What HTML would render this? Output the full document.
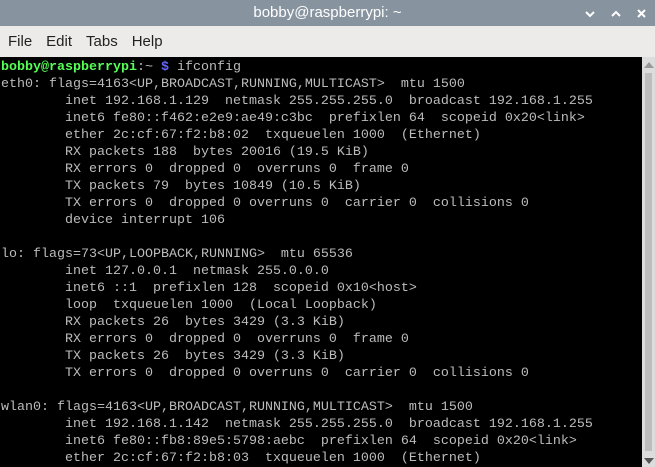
<!DOCTYPE html>
<html><head><style>
body{margin:0;width:655px;height:467px;overflow:hidden;background:#000;font-family:"Liberation Sans",sans-serif}
#t{position:absolute;top:0;left:0;width:655px;height:26px;background:#87939e;color:#fff;font-size:15px;text-align:center;line-height:26px}
#m{position:absolute;top:26px;left:0;width:655px;height:31px;background:#edebe9;font-size:15px;line-height:31px;color:#222}
#m span{margin-left:8px;margin-right:6px}
#term{position:absolute;top:57px;left:0;width:642px;height:410px;background:#000;overflow:hidden}
pre{margin:0;padding:2px 0 0 1px;font-family:"Liberation Mono",monospace;font-size:13.33px;line-height:17px;color:#bcbcbc}
.g{color:#5f5;font-weight:bold}.b{color:#66f;font-weight:bold}
#sb{position:absolute;left:642px;top:57px;width:13px;height:410px;background:#dcdcdc}
#th{position:absolute;left:645px;top:73px;width:7px;height:378px;background:#bdbdbd}
</style></head><body>
<div id="t">bobby@raspberrypi: ~</div>
<svg style="position:absolute;left:584px;top:9px" width="64" height="10"><path d="M2 3l4 4 4-4" stroke="#fff" stroke-width="2" fill="none"/><path d="M28 7l4-4 4 4" stroke="#fff" stroke-width="2" fill="none"/><path d="M54 1l7 7M61 1l-7 7" stroke="#fff" stroke-width="2"/></svg>
<div id="m"><span>File</span><span>Edit</span><span>Tabs</span><span>Help</span></div>
<div id="term"><pre><span class="g">bobby@raspberrypi</span>:~ <span class="b">$</span> ifconfig
eth0: flags=4163&lt;UP,BROADCAST,RUNNING,MULTICAST&gt;  mtu 1500
        inet 192.168.1.129  netmask 255.255.255.0  broadcast 192.168.1.255
        inet6 fe80::f462:e2e9:ae49:c3bc  prefixlen 64  scopeid 0x20&lt;link&gt;
        ether 2c:cf:67:f2:b8:02  txqueuelen 1000  (Ethernet)
        RX packets 188  bytes 20016 (19.5 KiB)
        RX errors 0  dropped 0  overruns 0  frame 0
        TX packets 79  bytes 10849 (10.5 KiB)
        TX errors 0  dropped 0 overruns 0  carrier 0  collisions 0
        device interrupt 106

lo: flags=73&lt;UP,LOOPBACK,RUNNING&gt;  mtu 65536
        inet 127.0.0.1  netmask 255.0.0.0
        inet6 ::1  prefixlen 128  scopeid 0x10&lt;host&gt;
        loop  txqueuelen 1000  (Local Loopback)
        RX packets 26  bytes 3429 (3.3 KiB)
        RX errors 0  dropped 0  overruns 0  frame 0
        TX packets 26  bytes 3429 (3.3 KiB)
        TX errors 0  dropped 0 overruns 0  carrier 0  collisions 0

wlan0: flags=4163&lt;UP,BROADCAST,RUNNING,MULTICAST&gt;  mtu 1500
        inet 192.168.1.142  netmask 255.255.255.0  broadcast 192.168.1.255
        inet6 fe80::fb8:89e5:5798:aebc  prefixlen 64  scopeid 0x20&lt;link&gt;
        ether 2c:cf:67:f2:b8:03  txqueuelen 1000  (Ethernet)</pre></div>
<div id="sb"></div><div id="th"></div>
<svg style="position:absolute;left:643px;top:60px" width="12" height="10"><path d="M1 8l5-6 5 6z" fill="#999"/></svg>
<svg style="position:absolute;left:643px;top:456px" width="12" height="10"><path d="M1 2l5 6 5-6z" fill="#555"/></svg>
</body></html>
